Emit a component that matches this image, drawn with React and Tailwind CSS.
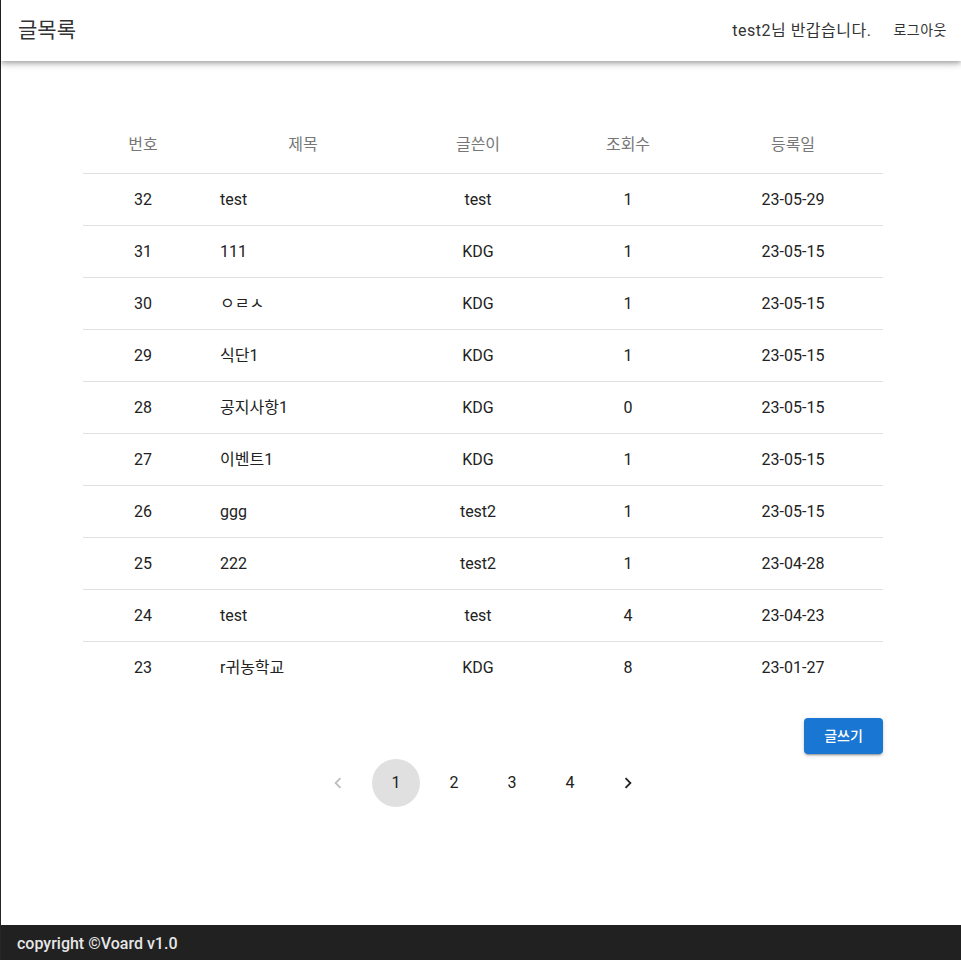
import React from 'react';

const rows = [
  { no: 32, title: 'test', writer: 'test', views: 1, date: '23-05-29' },
  { no: 31, title: '111', writer: 'KDG', views: 1, date: '23-05-15' },
  { no: 30, title: 'ㅇㄹㅅ', writer: 'KDG', views: 1, date: '23-05-15' },
  { no: 29, title: '식단1', writer: 'KDG', views: 1, date: '23-05-15' },
  { no: 28, title: '공지사항1', writer: 'KDG', views: 0, date: '23-05-15' },
  { no: 27, title: '이벤트1', writer: 'KDG', views: 1, date: '23-05-15' },
  { no: 26, title: 'ggg', writer: 'test2', views: 1, date: '23-05-15' },
  { no: 25, title: '222', writer: 'test2', views: 1, date: '23-04-28' },
  { no: 24, title: 'test', writer: 'test', views: 4, date: '23-04-23' },
  { no: 23, title: 'r귀농학교', writer: 'KDG', views: 8, date: '23-01-27' },
];

const font = { fontFamily: 'Roboto, "Noto Sans CJK KR", sans-serif' };

function Chevron({ dir, className }) {
  return (
    <svg viewBox="0 0 24 24" className={className} fill="currentColor">
      {dir === 'left' ? (
        <path d="M15.41 7.41 14 6l-6 6 6 6 1.41-1.41L10.83 12z" />
      ) : (
        <path d="M10 6 8.59 7.41 13.17 12l-4.58 4.59L10 18l6-6z" />
      )}
    </svg>
  );
}

export default function App() {
  return (
    <div className="min-h-screen flex flex-col bg-white border-l border-[#262626]" style={font}>
      {/* AppBar */}
      <header className="h-[61px] shrink-0 flex items-center justify-between pl-[17px] pr-[14px] bg-white shadow-[0_2px_4px_-1px_rgba(0,0,0,0.2),0_4px_5px_0_rgba(0,0,0,0.14),0_1px_10px_0_rgba(0,0,0,0.12)] relative z-10">
        <h1 className="text-[21px] text-[#333]">글목록</h1>
        <div className="flex items-center">
          <span className="text-[16px] tracking-[0.5px] text-[#333] mr-[22px]">test2님 반갑습니다.</span>
          <button className="text-[14px] tracking-[0.5px] text-[#333]">로그아웃</button>
        </div>
      </header>

      <main className="flex-1 flex flex-col items-center pt-[56px] pl-[4px]">
        <div className="w-[800px]">
          <table className="w-full border-collapse table-fixed">
            <colgroup>
              <col className="w-[120px]" />
              <col className="w-[200px]" />
              <col className="w-[150px]" />
              <col className="w-[150px]" />
              <col className="w-[180px]" />
            </colgroup>
            <thead>
              <tr className="h-[56px] border-b border-[#e0e0e0] text-[16px] text-[#777]">
                <th className="font-normal text-center">번호</th>
                <th className="font-normal text-center">제목</th>
                <th className="font-normal text-center">글쓴이</th>
                <th className="font-normal text-center">조회수</th>
                <th className="font-normal text-center">등록일</th>
              </tr>
            </thead>
            <tbody>
              {rows.map((r, i) => (
                <tr
                  key={r.no}
                  className={`h-[52px] text-[16px] text-[#222] ${i < rows.length - 1 ? 'border-b border-[#e0e0e0]' : ''}`}
                >
                  <td className="text-center pt-[2px]">{r.no}</td>
                  <td className="text-left pl-[17px] pt-[2px]">{r.title}</td>
                  <td className="text-center pt-[2px]">{r.writer}</td>
                  <td className="text-center pt-[2px]">{r.views}</td>
                  <td className="text-center pt-[2px]">{r.date}</td>
                </tr>
              ))}
            </tbody>
          </table>

          <div className="flex justify-end mt-[25px]">
            <button className="h-[36px] w-[79px] rounded bg-[#1976d2] text-white text-[14px] font-medium shadow-[0_3px_1px_-2px_rgba(0,0,0,0.2),0_2px_2px_0_rgba(0,0,0,0.14),0_1px_5px_0_rgba(0,0,0,0.12)]">
              글쓰기
            </button>
          </div>

          <nav className="flex justify-center items-center gap-[10px] mt-[5px]">
            <button className="w-12 h-12 rounded-full flex items-center justify-center text-[#bdbdbd]">
              <Chevron dir="left" className="w-[22px] h-[22px]" />
            </button>
            {[1, 2, 3, 4].map((n) => (
              <button
                key={n}
                className={`w-12 h-12 rounded-full flex items-center justify-center text-[16px] text-[#222] ${n === 1 ? 'bg-[#e0e0e0]' : ''}`}
              >
                {n}
              </button>
            ))}
            <button className="w-12 h-12 rounded-full flex items-center justify-center text-[#222]">
              <Chevron dir="right" className="w-[22px] h-[22px]" />
            </button>
          </nav>
        </div>
      </main>

      <footer className="h-[35px] shrink-0 bg-[#212121] flex items-center pl-[16px] pt-[3px]">
        <span className="text-[16px] font-medium text-[#e6e6e6]">copyright ©Voard v1.0</span>
      </footer>
    </div>
  );
}
